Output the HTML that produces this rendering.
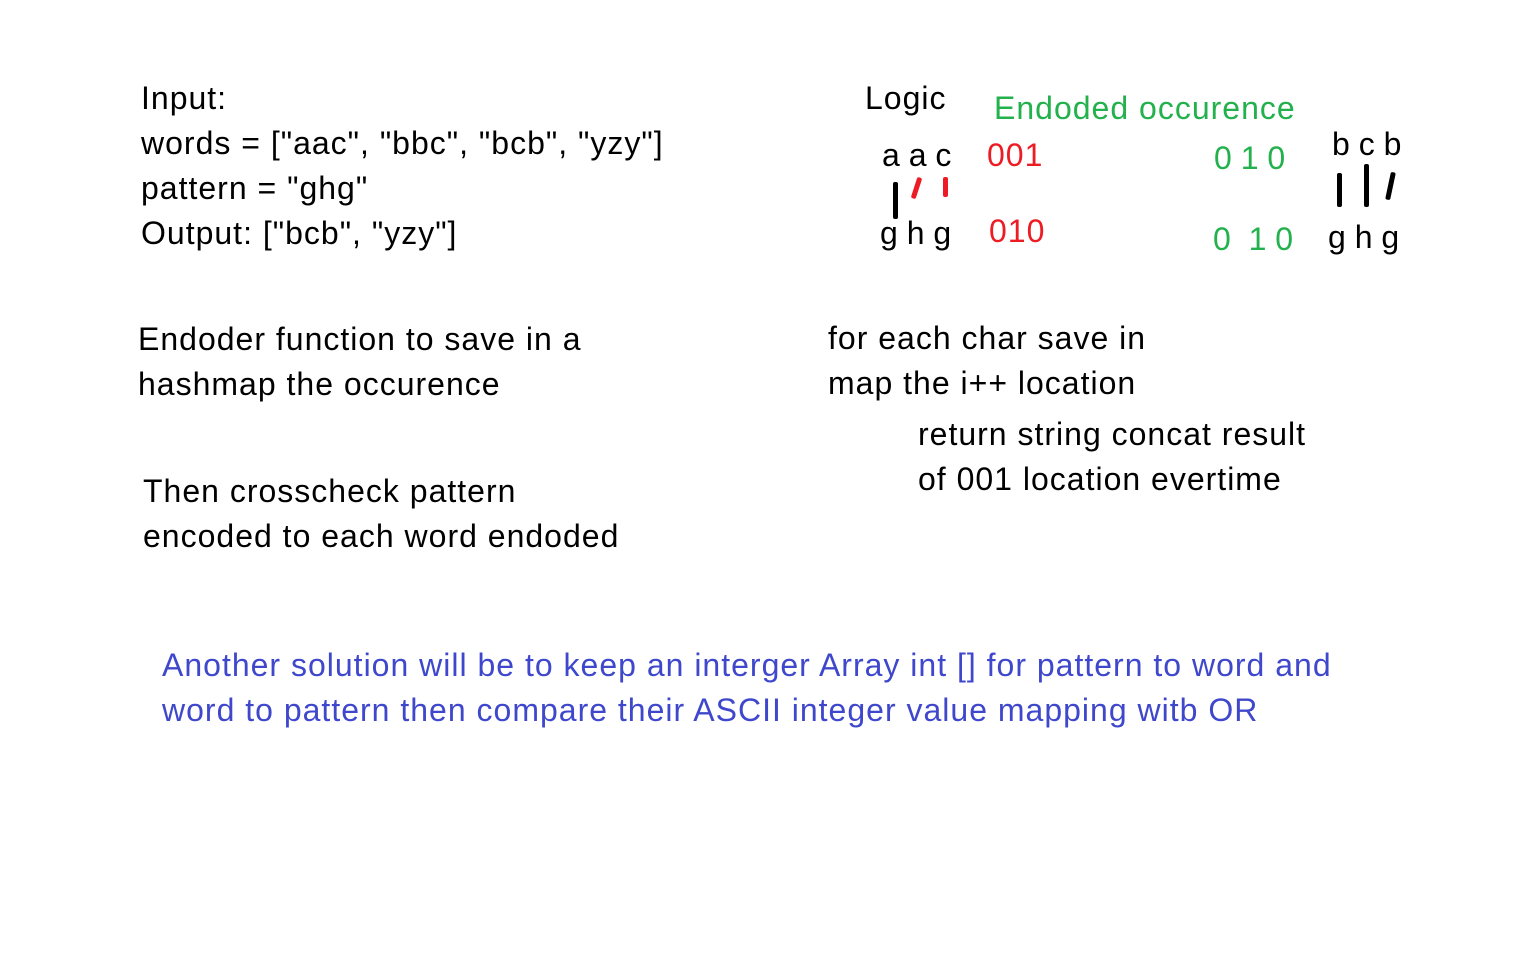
<!DOCTYPE html>
<html><head><meta charset="utf-8"><style>
body{margin:0;width:1536px;height:960px;background:#fff;position:relative;overflow:hidden;font-family:"Liberation Sans",sans-serif;}
.t{position:absolute;white-space:nowrap;font-size:32px;line-height:34px;color:#000;letter-spacing:1px;}
.r{color:#ed1c24}.g{color:#22b14c}.b{color:#3f48cc}
.bar{position:absolute;background:#000;border-radius:2px}
</style></head><body>
<div class="t" style="left:141px;top:81px">Input:</div>
<div class="t" style="left:141px;top:126px">words = ["aac", "bbc", "bcb", "yzy"]</div>
<div class="t" style="left:141px;top:171px">pattern = "ghg"</div>
<div class="t" style="left:141px;top:216px">Output: ["bcb", "yzy"]</div>

<div class="t" style="left:865px;top:81px">Logic</div>
<div class="t g" style="left:994px;top:91px">Endoded occurence</div>
<div class="t" style="left:882px;top:138px;letter-spacing:0">a a c</div>
<div class="t r" style="left:987px;top:138px">001</div>
<div class="t" style="left:880px;top:216px;letter-spacing:0">g h g</div>
<div class="t r" style="left:989px;top:214px">010</div>
<div class="t g" style="left:1214px;top:141px;letter-spacing:0">0 1 0</div>
<div class="t g" style="left:1213px;top:222px;letter-spacing:0">0 &nbsp;1 0</div>
<div class="t" style="left:1332px;top:127px;letter-spacing:0">b c b</div>
<div class="t" style="left:1328px;top:220px;letter-spacing:0">g h g</div>
<div class="bar" style="left:893px;top:182px;width:5px;height:37px"></div>
<div class="bar" style="left:914px;top:177px;width:5px;height:22px;background:#ed1c24;transform:rotate(18deg)"></div>
<div class="bar" style="left:943px;top:177px;width:5px;height:20px;background:#ed1c24"></div>
<div class="bar" style="left:1337px;top:173px;width:5px;height:34px"></div>
<div class="bar" style="left:1364px;top:164px;width:5px;height:43px"></div>
<div class="bar" style="left:1388px;top:172px;width:5px;height:28px;transform:rotate(12deg)"></div>

<div class="t" style="left:138px;top:322px">Endoder function to save in a</div>
<div class="t" style="left:138px;top:367px">hashmap the occurence</div>
<div class="t" style="left:828px;top:321px">for each char save in</div>
<div class="t" style="left:828px;top:366px">map the i++ location</div>
<div class="t" style="left:918px;top:417px">return string concat result</div>
<div class="t" style="left:918px;top:462px">of 001 location evertime</div>
<div class="t" style="left:143px;top:474px">Then crosscheck pattern</div>
<div class="t" style="left:143px;top:519px">encoded to each word endoded</div>

<div class="t b" style="left:162px;top:648px">Another solution will be to keep an interger Array int [] for pattern to word and</div>
<div class="t b" style="left:162px;top:693px">word to pattern then compare their ASCII integer value mapping witb OR</div>
</body></html>
